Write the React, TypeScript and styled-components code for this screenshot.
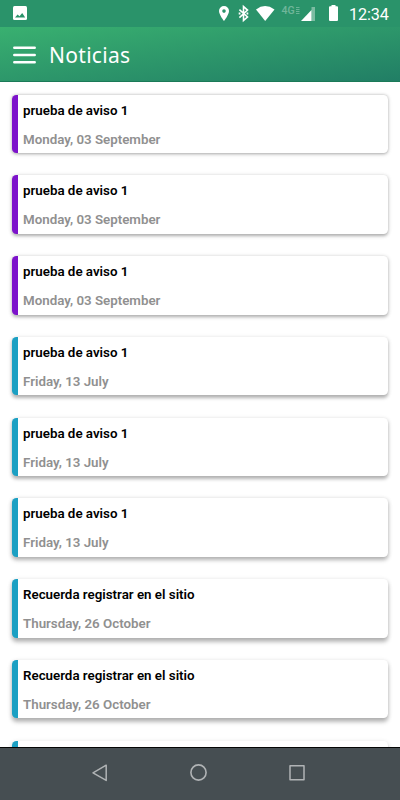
import React from "react";
import styled, { createGlobalStyle } from "styled-components";

const GlobalStyle = createGlobalStyle`
  * { box-sizing: border-box; }
  html, body { margin: 0; padding: 0; overflow: hidden; }
  body { background: #fff; font-family: Roboto, "Liberation Sans", sans-serif; }
  svg { display: block; flex: none; }
`;

const Screen = styled.div`
  display: flex;
  flex-direction: column;
  width: 100%;
  height: 800px;
  overflow: hidden;
  background: #fff;
`;

const StatusBar = styled.div`
  display: flex;
  align-items: center;
  justify-content: space-between;
  flex: none;
  height: 27px;
  padding: 0 11px 0 13px;
  background: #2a936a;
`;

const StatusIcons = styled.div`
  display: flex;
  align-items: center;
  height: 27px;
`;

const Clock = styled.span`
  width: 40px;
  margin-left: 10px;
  padding-top: 1px;
  color: #fff;
  font-size: 16.2px;
  line-height: 27px;
  font-weight: 450;
  letter-spacing: -0.1px;
  white-space: nowrap;
`;

const AppBar = styled.header`
  display: flex;
  align-items: center;
  flex: none;
  gap: 13px;
  height: 55px;
  padding: 1px 0 0 13px;
  border-bottom: 1px solid #1b7a58;
  background: linear-gradient(to bottom right, #39b070, #217e65);
`;

const MenuButton = styled.button`
  display: flex;
  width: 23px;
  padding: 0;
  border: 0;
  background: none;
`;

const Title = styled.h1`
  margin: 0;
  padding-top: 1px;
  color: #fff;
  font-family: "Noto Sans", sans-serif;
  font-size: 21px;
  line-height: 52px;
  font-weight: 400;
  letter-spacing: 0.3px;
`;

const List = styled.main`
  display: flex;
  flex-direction: column;
  flex: 1;
  gap: 22.28px;
  min-height: 0;
  padding: 12.55px 12px 0;
  overflow: hidden;
`;

const Card = styled.article<{ $accent: string; $lift: number }>`
  flex: none;
  height: 58.5px;
  padding: 6px 0 0 5px;
  border-left: 6px solid ${(p) => p.$accent};
  border-radius: 4.5px;
  background: #fff;
  box-shadow:
    0 ${(p) => 0.8 + p.$lift * 0.42}px ${(p) => 3 + p.$lift * 0.2}px rgba(0, 0, 0, 0.26),
    0 1px 5px rgba(0, 0, 0, 0.12);
`;

const CardTitle = styled.h2`
  margin: 0;
  color: #000;
  font-size: 13.33px;
  line-height: 19px;
  font-weight: 600;
`;

const CardDate = styled.p`
  margin: 10px 0 0;
  color: #909090;
  font-size: 13.33px;
  line-height: 19px;
  font-weight: 600;
`;

const NavBar = styled.nav`
  display: flex;
  justify-content: center;
  flex: none;
  gap: 82px;
  height: 53px;
  padding: 16px 3px 0 0;
  border-top: 1px solid #050606;
  background: #464e52;
`;

const notices = [
  ["prueba de aviso 1", "Monday, 03 September", "#7d13cb"],
  ["prueba de aviso 1", "Monday, 03 September", "#7d13cb"],
  ["prueba de aviso 1", "Monday, 03 September", "#7d13cb"],
  ["prueba de aviso 1", "Friday, 13 July", "#1ca0c3"],
  ["prueba de aviso 1", "Friday, 13 July", "#1ca0c3"],
  ["prueba de aviso 1", "Friday, 13 July", "#1ca0c3"],
  ["Recuerda registrar en el sitio", "Thursday, 26 October", "#1ca0c3"],
  ["Recuerda registrar en el sitio", "Thursday, 26 October", "#1ca0c3"],
];

const PictureIcon = () => (
  <svg width="14" height="27" viewBox="0 0 14 27">
    <rect y="6" width="14" height="14" rx="1.5" fill="#fff" />
    <path d="M2 17.5 4.600 14.500l1.900 1.700L9.200 13l3 4.500z" fill="#2a936a" />
  </svg>
);

const SignalIcons = () => (
  <svg width="121" height="27" viewBox="218 0 121 27" fill="#fff">
    <path fillRule="evenodd" d="M224 6a5 5 0 0 0-5 5c0 3.700 5 10 5 10s5-6.300 5-10a5 5 0 0 0-5-5zm0 3.300a1.800 1.800 0 1 1 0 3.600 1.800 1.800 0 0 1 0-3.600z" />
    <path d="M239.400 9.600 247.500 17l-4 3.400V6.600l4 3.500-8.100 7.500" fill="none" stroke="#fff" strokeWidth="1.600" />
    <path d="M238.700 12.600h1.800v1.800h-1.800zM246.500 12.600h1.800v1.800h-1.800z" />
    <path d="M256 9.400Q265 2.600 274.500 9.400L265.200 21z" />
    <text x="281.500" y="14" fontFamily="Roboto, sans-serif" fontSize="10.500" fontWeight="500" opacity=".32">4G</text>
    <path d="M296 7.500h3.500M296 9.500h3.500M296 11.500h3.500M296 13.500h3.500" stroke="#fff" opacity=".3" />
    <path d="M311.500 7h3.500v14h-3.500z" opacity=".38" />
    <path d="M311.500 10V21h-10.500z" />
    <path d="M331.500 5h4v1.300h1.500q1 0 1 1V20q0 1-1 1h-7q-1 0-1-1V7.300q0-1 1-1h1.500z" />
  </svg>
);

export default function App() {
  return (
    <>
      <GlobalStyle />
      <Screen>
        <StatusBar>
          <PictureIcon />
          <StatusIcons>
            <SignalIcons />
            <Clock>12:34</Clock>
          </StatusIcons>
        </StatusBar>
        <AppBar>
          <MenuButton aria-label="Menu">
            <svg width="23" height="18" viewBox="0 0 23 18" stroke="#fff" strokeWidth="2.500" strokeLinecap="round">
              <path d="M1.300 1.800h20.400M1.300 9h20.400M1.300 16.200h20.400" />
            </svg>
          </MenuButton>
          <Title>Noticias</Title>
        </AppBar>
        <List>
          {notices.map(([title, date, accent], i) => (
            <Card key={i} $accent={accent} $lift={i}>
              <CardTitle>{title}</CardTitle>
              <CardDate>{date}</CardDate>
            </Card>
          ))}
          <Card $accent="#1ca0c3" $lift={8} />
        </List>
        <NavBar>
          <svg width="16" height="18" viewBox="0 0 16 18" fill="none" stroke="#b0b3b5" strokeWidth="1.500" strokeLinejoin="round">
            <path d="M14.200 1.200v15.200L1 8.800z" />
          </svg>
          <svg width="17" height="18" viewBox="0 0 17 18" fill="none" stroke="#b0b3b5" strokeWidth="1.600">
            <circle cx="8.500" cy="8.500" r="7.600" />
          </svg>
          <svg width="16" height="18" viewBox="0 0 16 18" fill="none" stroke="#b0b3b5" strokeWidth="1.500" strokeLinejoin="round">
            <rect x="1" y="1.700" width="14" height="14" />
          </svg>
        </NavBar>
      </Screen>
    </>
  );
}
